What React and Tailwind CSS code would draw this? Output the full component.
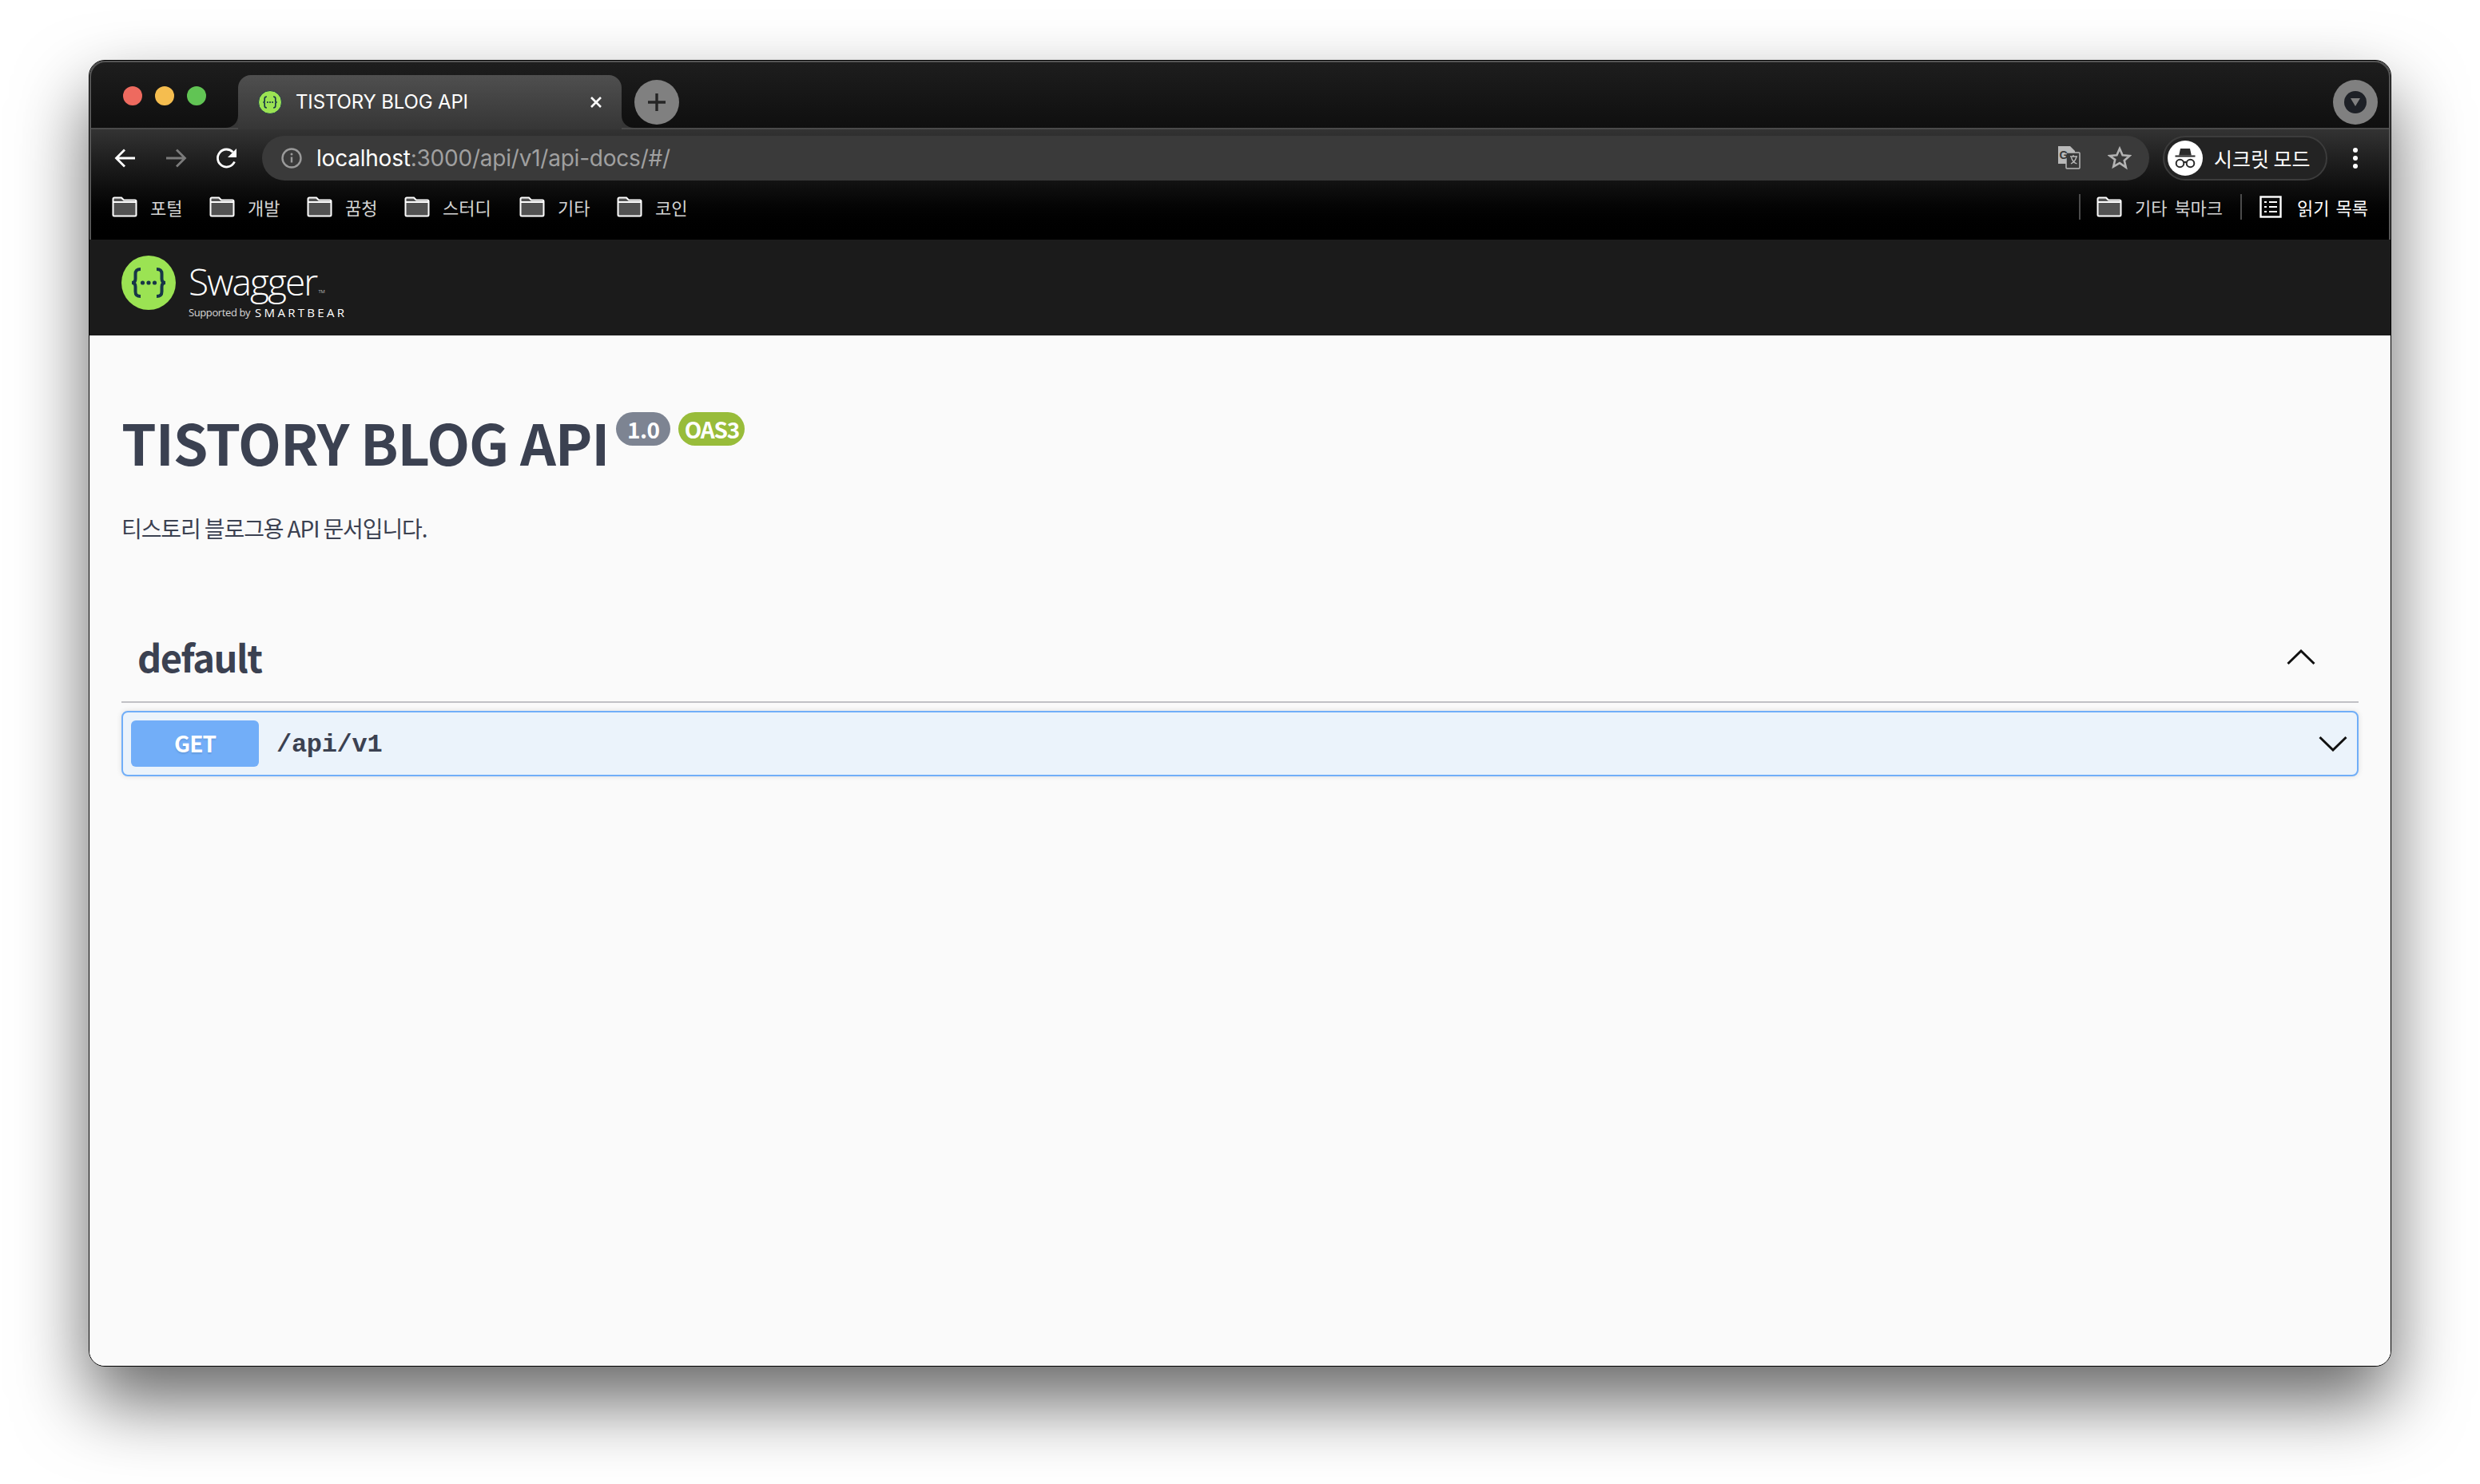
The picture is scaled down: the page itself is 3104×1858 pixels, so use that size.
import React from "react";

const KR = "font-['Noto_Sans_CJK_KR',sans-serif]";
const UI = "font-['Inter','Noto_Sans_CJK_KR',sans-serif]";

function Folder({ className = "" }) {
  return (
    <svg width="32" height="26" viewBox="0 0 32 26" className={"shrink-0 " + className}>
      <path d="M1.500 3a1.500 1.500 0 0 1 1.500-1.500h9l3 3h14a1.500 1.500 0 0 1 1.500 1.500v17a1.500 1.500 0 0 1-1.500 1.500H3A1.500 1.500 0 0 1 1.500 23z" fill="#525252" stroke="#fff" strokeWidth="2" />
      <path d="M2 7h28" stroke="#fff" strokeWidth="2" fill="none" />
    </svg>
  );
}

function Bookmark({ label, className = "" }) {
  return (
    <div className={"flex items-center gap-[16px] " + className}>
      <Folder />
      <span className={KR + " text-[22px] leading-none text-[#d4d4d4] [word-spacing:4px]"}>{label}</span>
    </div>
  );
}

function Braces({ size, color = "#173647" }) {
  return (
    <svg width={size} height={size} viewBox="0 0 68 68">
      <path d="M24 17c-5 0-6.500 2-6.500 6v6c0 3-1.500 5-4.500 5 3 0 4.500 2 4.500 5v6c0 4 1.500 6 6.500 6M44 17c5 0 6.500 2 6.500 6v6c0 3 1.500 5 4.500 5-3 0-4.500 2-4.500 5v6c0 4-1.500 6-6.500 6" fill="none" stroke={color} strokeWidth="4" />
      <circle cx="26.500" cy="34" r="2.600" fill={color} />
      <circle cx="34" cy="34" r="2.600" fill={color} />
      <circle cx="41.500" cy="34" r="2.600" fill={color} />
    </svg>
  );
}

function Chrome() {
  return (
    <div className="relative shrink-0 flex flex-col">
      <div className="h-[84px] flex items-end bg-gradient-to-b from-[#1e1e1e] to-[#0f0f0f]">
        <div className="w-[186px] h-[84px] flex items-start pt-[32px] pl-[42px] gap-[16px]">
          <span className="w-6 h-6 rounded-full bg-[#ee6a5f]" />
          <span className="w-6 h-6 rounded-full bg-[#f5bd4f]" />
          <span className="w-6 h-6 rounded-full bg-[#61c454]" />
        </div>
        <div className="relative w-[480px] h-[68px] rounded-t-[16px] bg-gradient-to-b from-[#4f4f4f] to-[#363636] flex items-center pl-[25px] pr-[23px] -mb-[2px] z-10">
          <div className="w-[30px] h-[30px] rounded-full bg-[#9be353] border border-[#23384a] flex items-center justify-center">
            <Braces size={28} />
          </div>
          <span className={UI + " ml-[17px] text-[24px] leading-none text-white flex-1 tracking-[-0.15px]"}>TISTORY BLOG API</span>
          <svg width="18" height="18" viewBox="0 0 18 18"><path d="M3 3l12 12M15 3L3 15" stroke="#fff" strokeWidth="2.600" /></svg>
          <svg className="absolute -left-[16px] bottom-[2px]" width="16" height="16" viewBox="0 0 16 16"><path d="M16 0v16H0c9 0 16-6 16-16z" fill="#363636" /></svg>
          <svg className="absolute -right-[16px] bottom-[2px]" width="16" height="16" viewBox="0 0 16 16"><path d="M0 0v16h16C7 16 0 10 0 0z" fill="#363636" /></svg>
        </div>
        <div className="ml-[16px] mb-[4px] w-[56px] h-[56px] rounded-full bg-[#808080] flex items-center justify-center">
          <svg width="26" height="26" viewBox="0 0 26 26"><path d="M13 2v22M2 13h22" stroke="#252525" strokeWidth="3.400" /></svg>
        </div>
        <div className="flex-1" />
        <div className="mr-[16px] mb-[4px] w-[56px] h-[56px] rounded-full bg-[#808080] flex items-center justify-center">
          <div className="w-[28px] h-[28px] rounded-full bg-[#1d2026] flex items-center justify-center">
            <svg width="14" height="12" viewBox="0 0 14 12"><path d="M1 1h12L7 11z" fill="#808080" /></svg>
          </div>
        </div>
      </div>
      <div className="h-[2px] bg-[#4a4a4a]" />
      <div className="h-[138px] bg-gradient-to-b from-[#333333] via-[#0a0a0a] via-[60%] to-[#000000] flex flex-col">
        <div className="h-[64px] pt-[8px] flex items-start">
          <div className="w-[216px] h-[56px] flex items-center pl-[30px] gap-[33px]">
            <svg width="30" height="30" viewBox="0 0 30 30" className="shrink-0"><path d="M27 15H4M14 4.500L3.500 15 14 25.500" fill="none" stroke="#fff" strokeWidth="2.800" /></svg>
            <svg width="30" height="30" viewBox="0 0 30 30" className="shrink-0"><path d="M3 15h23M16 4.500L26.500 15 16 25.500" fill="none" stroke="#7b7b7b" strokeWidth="2.800" /></svg>
            <svg width="30" height="30" viewBox="0 0 30 30" className="shrink-0 ml-[1px]"><path d="M24.500 19.500A11 11 0 1 1 22.500 7.500" fill="none" stroke="#fff" strokeWidth="2.800" /><path d="M27 3v11H16z" fill="#fff" /></svg>
          </div>
          <div className="w-[2362px] h-[56px] rounded-full bg-[#3a3a3a] flex items-center pl-[24px] pr-[22px]">
            <svg width="26" height="26" viewBox="0 0 26 26" className="shrink-0"><circle cx="13" cy="13" r="11.500" fill="none" stroke="#9a9a9a" strokeWidth="2.400" /><path d="M13 11.500v7" stroke="#9a9a9a" strokeWidth="2.400" /><circle cx="13" cy="8" r="1.500" fill="#9a9a9a" /></svg>
            <span className={UI + " ml-[18px] text-[28px] leading-none text-[#a0a0a0] flex-1 tracking-[-0.22px]"}>
              <span className="text-white">localhost</span>:3000/api/v1/api-docs/#/
            </span>
            <svg width="30" height="30" viewBox="0 0 30 30" className="shrink-0 -ml-[2px]">
              <path d="M1 0h15l6 6v16H1z" fill="#b9b9b9" />
              <rect x="11" y="8" width="17" height="20" rx="1" fill="#383838" stroke="#b9b9b9" strokeWidth="1.500" />
              <text x="2.500" y="16" fontSize="14" fontWeight="700" fontFamily="Liberation Sans, sans-serif" fill="#3a3a3a">G</text>
              <path d="M16 13h9M20 11v2M24 13c-1 5-5 8-7 9M17.500 14c1 4 4 7 7 8" fill="none" stroke="#b9b9b9" strokeWidth="1.300" />
            </svg>
            <svg width="30" height="30" viewBox="0 0 30 30" className="ml-[33px] shrink-0"><path d="M15 3l3.600 8.200 8.900.8-6.700 5.900 2 8.700L15 21.100l-7.800 4.500 2-8.700L2.500 12l8.900-.8z" fill="none" stroke="#b4b4b4" strokeWidth="2.600" /></svg>
          </div>
          <div className="ml-[17px] w-[206px] h-[56px] rounded-full bg-[#232323] border-2 border-[#3c3c3c] flex items-center pl-[4px]">
            <div className="w-[44px] h-[44px] rounded-full bg-white flex items-center justify-center shrink-0">
              <svg width="30" height="30" viewBox="0 0 30 30"><path d="M9 3h12l1.800 8.500H7.200z" fill="#2a2a2a" /><path d="M2.500 12.500h25" stroke="#2a2a2a" strokeWidth="2" /><circle cx="8.500" cy="21.500" r="4.800" fill="none" stroke="#2a2a2a" strokeWidth="2" /><circle cx="21.500" cy="21.500" r="4.800" fill="none" stroke="#2a2a2a" strokeWidth="2" /><path d="M13 20.500c1.300-.8 2.700-.8 4 0" fill="none" stroke="#2a2a2a" strokeWidth="2" /></svg>
            </div>
            <span className={KR + " ml-[14px] text-[25px] leading-none text-white whitespace-nowrap"}>시크릿 모드</span>
          </div>
          <div className="ml-[32px] h-[56px] flex flex-col items-center justify-center gap-[4px]">
            <span className="w-[6px] h-[6px] rounded-full bg-white" />
            <span className="w-[6px] h-[6px] rounded-full bg-white" />
            <span className="w-[6px] h-[6px] rounded-full bg-white" />
          </div>
        </div>
        <div className="flex-1 flex items-center pl-[28px] pr-[28px] pb-[8px]">
          <Bookmark label="포털" className="w-[122px]" />
          <Bookmark label="개발" className="w-[122px]" />
          <Bookmark label="꿈청" className="w-[122px]" />
          <Bookmark label="스터디" className="w-[144px]" />
          <Bookmark label="기타" className="w-[122px]" />
          <Bookmark label="코인" />
          <div className="flex-1" />
          <div className="w-[2px] h-[32px] bg-[#4b4b4b]" />
          <Bookmark label="기타 북마크" className="ml-[20px]" />
          <div className="ml-[22px] w-[2px] h-[32px] bg-[#4b4b4b]" />
          <svg width="28" height="28" viewBox="0 0 28 28" className="ml-[22px] shrink-0"><rect x="1.500" y="1.500" width="25" height="25" fill="none" stroke="#fff" strokeWidth="2.400" /><path d="M6 8h3M12 8h10M6 14h3M12 14h10M6 20h3M12 20h10" stroke="#fff" strokeWidth="2.200" /></svg>
          <span className={KR + " ml-[19px] text-[22px] leading-none text-white whitespace-nowrap [word-spacing:3px]"}>읽기 목록</span>
        </div>
      </div>
      <div className="absolute inset-0 pointer-events-none rounded-t-[20px] border-t-2 border-x-2 border-[#555555] z-20" />
    </div>
  );
}

function SwaggerBar() {
  return (
    <div className="h-[120px] shrink-0 bg-[#1b1b1b] flex items-start pl-[40px] pt-[20px]">
      <div className="w-[68px] h-[68px] rounded-full bg-[#9be353] flex items-center justify-center shrink-0">
        <Braces size={68} />
      </div>
      <div className="ml-[16px] flex flex-col">
        <div className="font-['Open_Sans',sans-serif] font-light text-[46px] leading-[52px] mt-[6px] text-white tracking-[-1.900px] flex items-start">
          Swagger<span className="text-[6px] leading-none mt-[36px] ml-[2px] tracking-normal">TM</span>
        </div>
        <div className="flex items-center mt-[5px] text-white">
          <span className="font-['Open_Sans',sans-serif] text-[13px] leading-[16px] text-[#d8d8d8] tracking-[-0.400px]">Supported by</span>
          <span className="ml-[6px] font-['Open_Sans',sans-serif] font-medium text-[15px] leading-[16px] tracking-[3.300px]">SMARTBEAR</span>
        </div>
      </div>
    </div>
  );
}

function Content() {
  return (
    <div className="flex-1 bg-[#fafafa] px-[40px]">
      <div className="pt-[96px] flex items-start">
        <h1 className={KR + " font-semibold text-[70px] leading-[78px] -mt-[2px] text-[#3b4151] whitespace-nowrap tracking-[-1.100px]"}>TISTORY BLOG API</h1>
        <span className={KR + " ml-[9px] w-[68px] h-[42px] rounded-[21px] bg-[#7d8492] flex items-center justify-center font-semibold text-[28px] leading-none text-white tracking-[-0.5px]"}>1.0</span>
        <span className={KR + " ml-[10px] w-[83px] h-[42px] rounded-[21px] bg-[#98bc3a] flex items-center justify-center font-semibold text-[28px] leading-none text-white tracking-[-1.200px]"}>OAS3</span>
      </div>
      <p className={KR + " mt-[49px] text-[28px] leading-[40px] text-[#3b4151] tracking-[-1.100px]"}>티스토리 블로그용 API 문서입니다.</p>
      <div className="mt-[84px] h-[115px] border-b-2 border-[#c1c1c5] flex items-center justify-between pl-[20px] pr-[54px]">
        <span className={KR + " font-semibold text-[47px] leading-none text-[#3b4151] tracking-[-1.500px]"}>default</span>
        <svg width="36" height="20" viewBox="0 0 36 20" className="mt-[2px]"><path d="M1.500 18L18 2l16.500 16" fill="none" stroke="#111" strokeWidth="3" /></svg>
      </div>
      <div className="mt-[10px] h-[82px] rounded-[8px] border-2 border-[#70aef8] bg-[#ebf3fb] shadow-[0_0_6px_rgba(0,0,0,0.12)] flex items-center pl-[10px] pr-[12px]">
        <div className={KR + " w-[160px] h-[58px] rounded-[6px] bg-[#72aef8] flex items-center justify-center pb-[2px] font-semibold text-[28px] leading-none text-white tracking-[-1px] [text-shadow:0_2px_2px_rgba(0,0,0,0.1)]"}>GET</div>
        <span className="ml-[22px] font-['Liberation_Mono',monospace] font-bold text-[32px] leading-none mt-[4px] text-[#3b4151] flex-1 tracking-[-0.3px]">/api/v1</span>
        <svg width="36" height="20" viewBox="0 0 36 20"><path d="M1.500 2L18 18 34.500 2" fill="none" stroke="#111" strokeWidth="3" /></svg>
      </div>
    </div>
  );
}

export default function App() {
  return (
    <div className="w-[3104px] h-[1858px] bg-white pl-[111px] pt-[75px] overflow-hidden">
      <div className="w-[2882px] h-[1636px] rounded-[20px] border border-black bg-[#fafafa] overflow-hidden flex flex-col shadow-[0_44px_90px_rgba(0,0,0,0.6)]">
        <Chrome />
        <SwaggerBar />
        <Content />
      </div>
    </div>
  );
}
